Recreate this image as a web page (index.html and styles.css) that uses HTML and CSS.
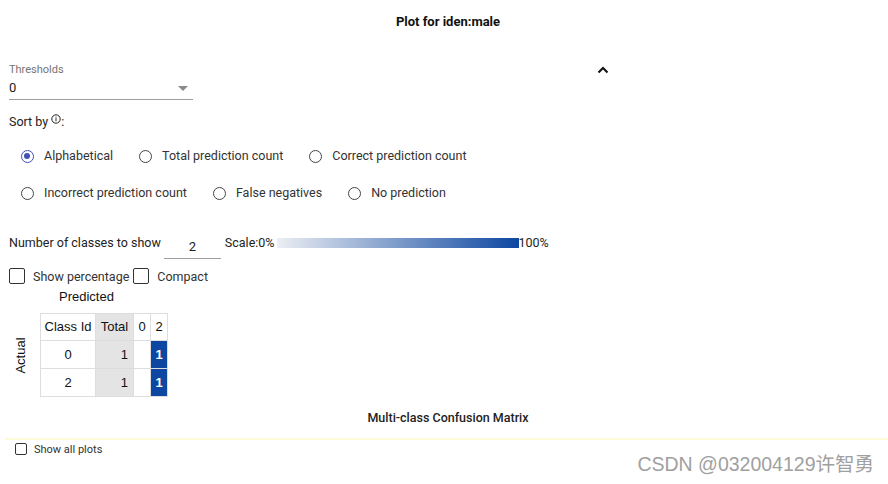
FILE: index.html
```html
<!DOCTYPE html>
<html>
<head>
<meta charset="utf-8">
<link rel="stylesheet" href="styles.css">
</head>
<body>
<div class="page">
  <div class="title">Plot for iden:male</div>

  <div class="header-row">
    <div class="select">
      <div class="select-label">Thresholds</div>
      <div class="select-field"><span>0</span><span class="arrow"></span></div>
    </div>
    <svg class="chevron" width="14" height="14" viewBox="0 0 14 14"><path d="M2.5 9.5 L7 5 L11.5 9.5" fill="none" stroke="#111" stroke-width="2"/></svg>
  </div>

  <div class="sortby">Sort by <svg class="info" width="10" height="10" viewBox="0 0 10 10"><circle cx="5" cy="5" r="4.2" fill="none" stroke="#222" stroke-width="1"/><rect x="4.5" y="4.2" width="1" height="3" fill="#222"/><rect x="4.5" y="2.6" width="1" height="1" fill="#222"/></svg>:</div>

  <div class="radio-row first">
    <div class="radio-item"><span class="radio checked"></span><span>Alphabetical</span></div>
    <div class="radio-item"><span class="radio"></span><span>Total prediction count</span></div>
    <div class="radio-item"><span class="radio"></span><span>Correct prediction count</span></div>
  </div>
  <div class="radio-row second">
    <div class="radio-item"><span class="radio"></span><span>Incorrect prediction count</span></div>
    <div class="radio-item"><span class="radio"></span><span>False negatives</span></div>
    <div class="radio-item"><span class="radio"></span><span>No prediction</span></div>
  </div>

  <div class="num-row">
    <span class="num-label">Number of classes to show</span>
    <div class="num-input">2</div>
    <span class="scale-label">Scale:0%</span>
    <div class="gradient"></div>
    <span class="scale-label">100%</span>
  </div>

  <div class="check-row">
    <span class="checkbox"></span><span class="check-label">Show percentage</span>
    <span class="checkbox second"></span><span class="check-label">Compact</span>
  </div>

  <div class="predicted">Predicted</div>

  <div class="matrix">
    <div class="actual"><span>Actual</span></div>
    <table class="cm">
      <tr><td class="c-id">Class Id</td><td class="c-total">Total</td><td class="c-n">0</td><td class="c-n">2</td></tr>
      <tr><td class="c-id">0</td><td class="c-total num">1</td><td class="c-n"></td><td class="c-n hot">1</td></tr>
      <tr><td class="c-id">2</td><td class="c-total num">1</td><td class="c-n"></td><td class="c-n hot">1</td></tr>
    </table>
  </div>

  <div class="matrix-title">Multi-class Confusion Matrix</div>
  <div class="divider"></div>
  <div class="show-all"><span class="checkbox small"></span><span>Show all plots</span></div>

  <div class="watermark">CSDN @032004129许智勇</div>
</div>
</body>
</html>
```

FILE: styles.css
```css
* { box-sizing: border-box; }
html, body { margin: 0; padding: 0; background: #fff; }
body { font-family: Roboto, "Liberation Sans", sans-serif; color: #222; font-size: 12.5px; }
.page { position: relative; width: 888px; height: 484px; overflow: hidden; }

.title { padding-top: 13px; padding-left: 8px; line-height: 18px; height: 31px; text-align: center; font-weight: 700; font-size: 13px; color: #111; }

.header-row { display: flex; align-items: flex-start; margin-top: 32px; }
.select { width: 184px; margin-left: 9px; }
.select-label { font-size: 11px; line-height: 13px; color: #757575; }
.select-field { display: flex; justify-content: space-between; align-items: center; margin-top: 4px; height: 20px; padding-bottom: 3px; border-bottom: 1px solid #9e9e9e; font-size: 13px; line-height: 16px; color: #222; }
.arrow { width: 0; height: 0; border-left: 5px solid transparent; border-right: 5px solid transparent; border-top: 5px solid #8a8a8a; margin-right: 5px; }
.chevron { margin-left: 403px; }

.sortby { margin-top: 14px; margin-left: 9px; line-height: 16px; display: flex; align-items: center; }
.info { margin-left: 3px; margin-top: -6px; }

.radio-row { display: flex; gap: 26px; margin-left: 21px; line-height: 20px; }
.radio-row.first { margin-top: 16px; }
.radio-row.second { margin-top: 17px; }
.radio-item { display: flex; align-items: center; gap: 10px; color: #333; }
.radio { width: 13px; height: 13px; border: 1.5px solid #444; border-radius: 50%; position: relative; flex: none; }
.radio.checked { border-color: #3f51b5; }
.radio.checked::after { content: ""; position: absolute; left: 2px; top: 2px; width: 6px; height: 6px; border-radius: 50%; background: #3f51b5; }

.num-row { display: flex; align-items: flex-start; margin-top: 32px; margin-left: 9px; height: 24px; }
.num-label { line-height: 16px; color: #222; }
.num-input { width: 57px; margin-left: 3px; margin-right: 4px; padding-top: 4px; line-height: 16px; height: 24px; border-bottom: 1px solid #9e9e9e; text-align: center; color: #222; font-size: 13px; }
.scale-label { line-height: 16px; color: #222; }
.gradient { width: 242px; height: 10px; margin-top: 3px; margin-left: 2px; background: linear-gradient(to right, #eceef3, #0d47a1); }

.check-row { display: flex; align-items: center; margin-top: 9px; margin-left: 9px; height: 16px; }
.checkbox { width: 16px; height: 16px; border: 1px solid #333; border-radius: 2px; flex: none; }
.checkbox.second { margin-left: 4px; }
.check-label { margin-left: 8px; color: #333; }

.predicted { margin-top: 5px; margin-left: 59px; line-height: 16px; font-family: "Liberation Sans", Arial, sans-serif; font-size: 13px; color: #111; }

.matrix { display: flex; margin-top: 8px; }
.actual { width: 40px; display: flex; align-items: center; justify-content: center; font-family: "Liberation Sans", Arial, sans-serif; font-size: 13px; color: #111; }
.actual span { transform: rotate(-90deg); display: block; white-space: nowrap; }
.cm { border-collapse: collapse; font-family: "Liberation Sans", Arial, sans-serif; font-size: 13px; color: #111; }
.cm td { border: 1px solid #ddd; height: 28px; padding: 0; text-align: center; }
.cm tr:first-child td { height: 27px; padding-bottom: 2px; }
.c-id { width: 55px; }
.c-total { width: 38px; background: #e4e4e4; }
.c-total.num { text-align: right; padding-right: 5px; }
.c-n { width: 17px; }
.hot { background: #0d47a1; color: #fff; font-weight: 700; }

.matrix-title { margin-top: 13px; padding-left: 8px; text-align: center; line-height: 16px; font-weight: 500; color: #222; }
.divider { margin-top: 12px; margin-left: 5px; height: 2px; background: #fbfbd6; }
.show-all { display: flex; align-items: center; gap: 7px; margin-top: 3px; margin-left: 15px; font-size: 11px; color: #333; height: 12px; }
.checkbox.small { width: 12px; height: 12px; }

.watermark { position: absolute; right: 14px; bottom: 7px; font-family: "Liberation Sans", "Noto Sans CJK SC", sans-serif; font-size: 19.5px; color: #a0a0a0; text-shadow: 0 0 1px #fff; }
```
